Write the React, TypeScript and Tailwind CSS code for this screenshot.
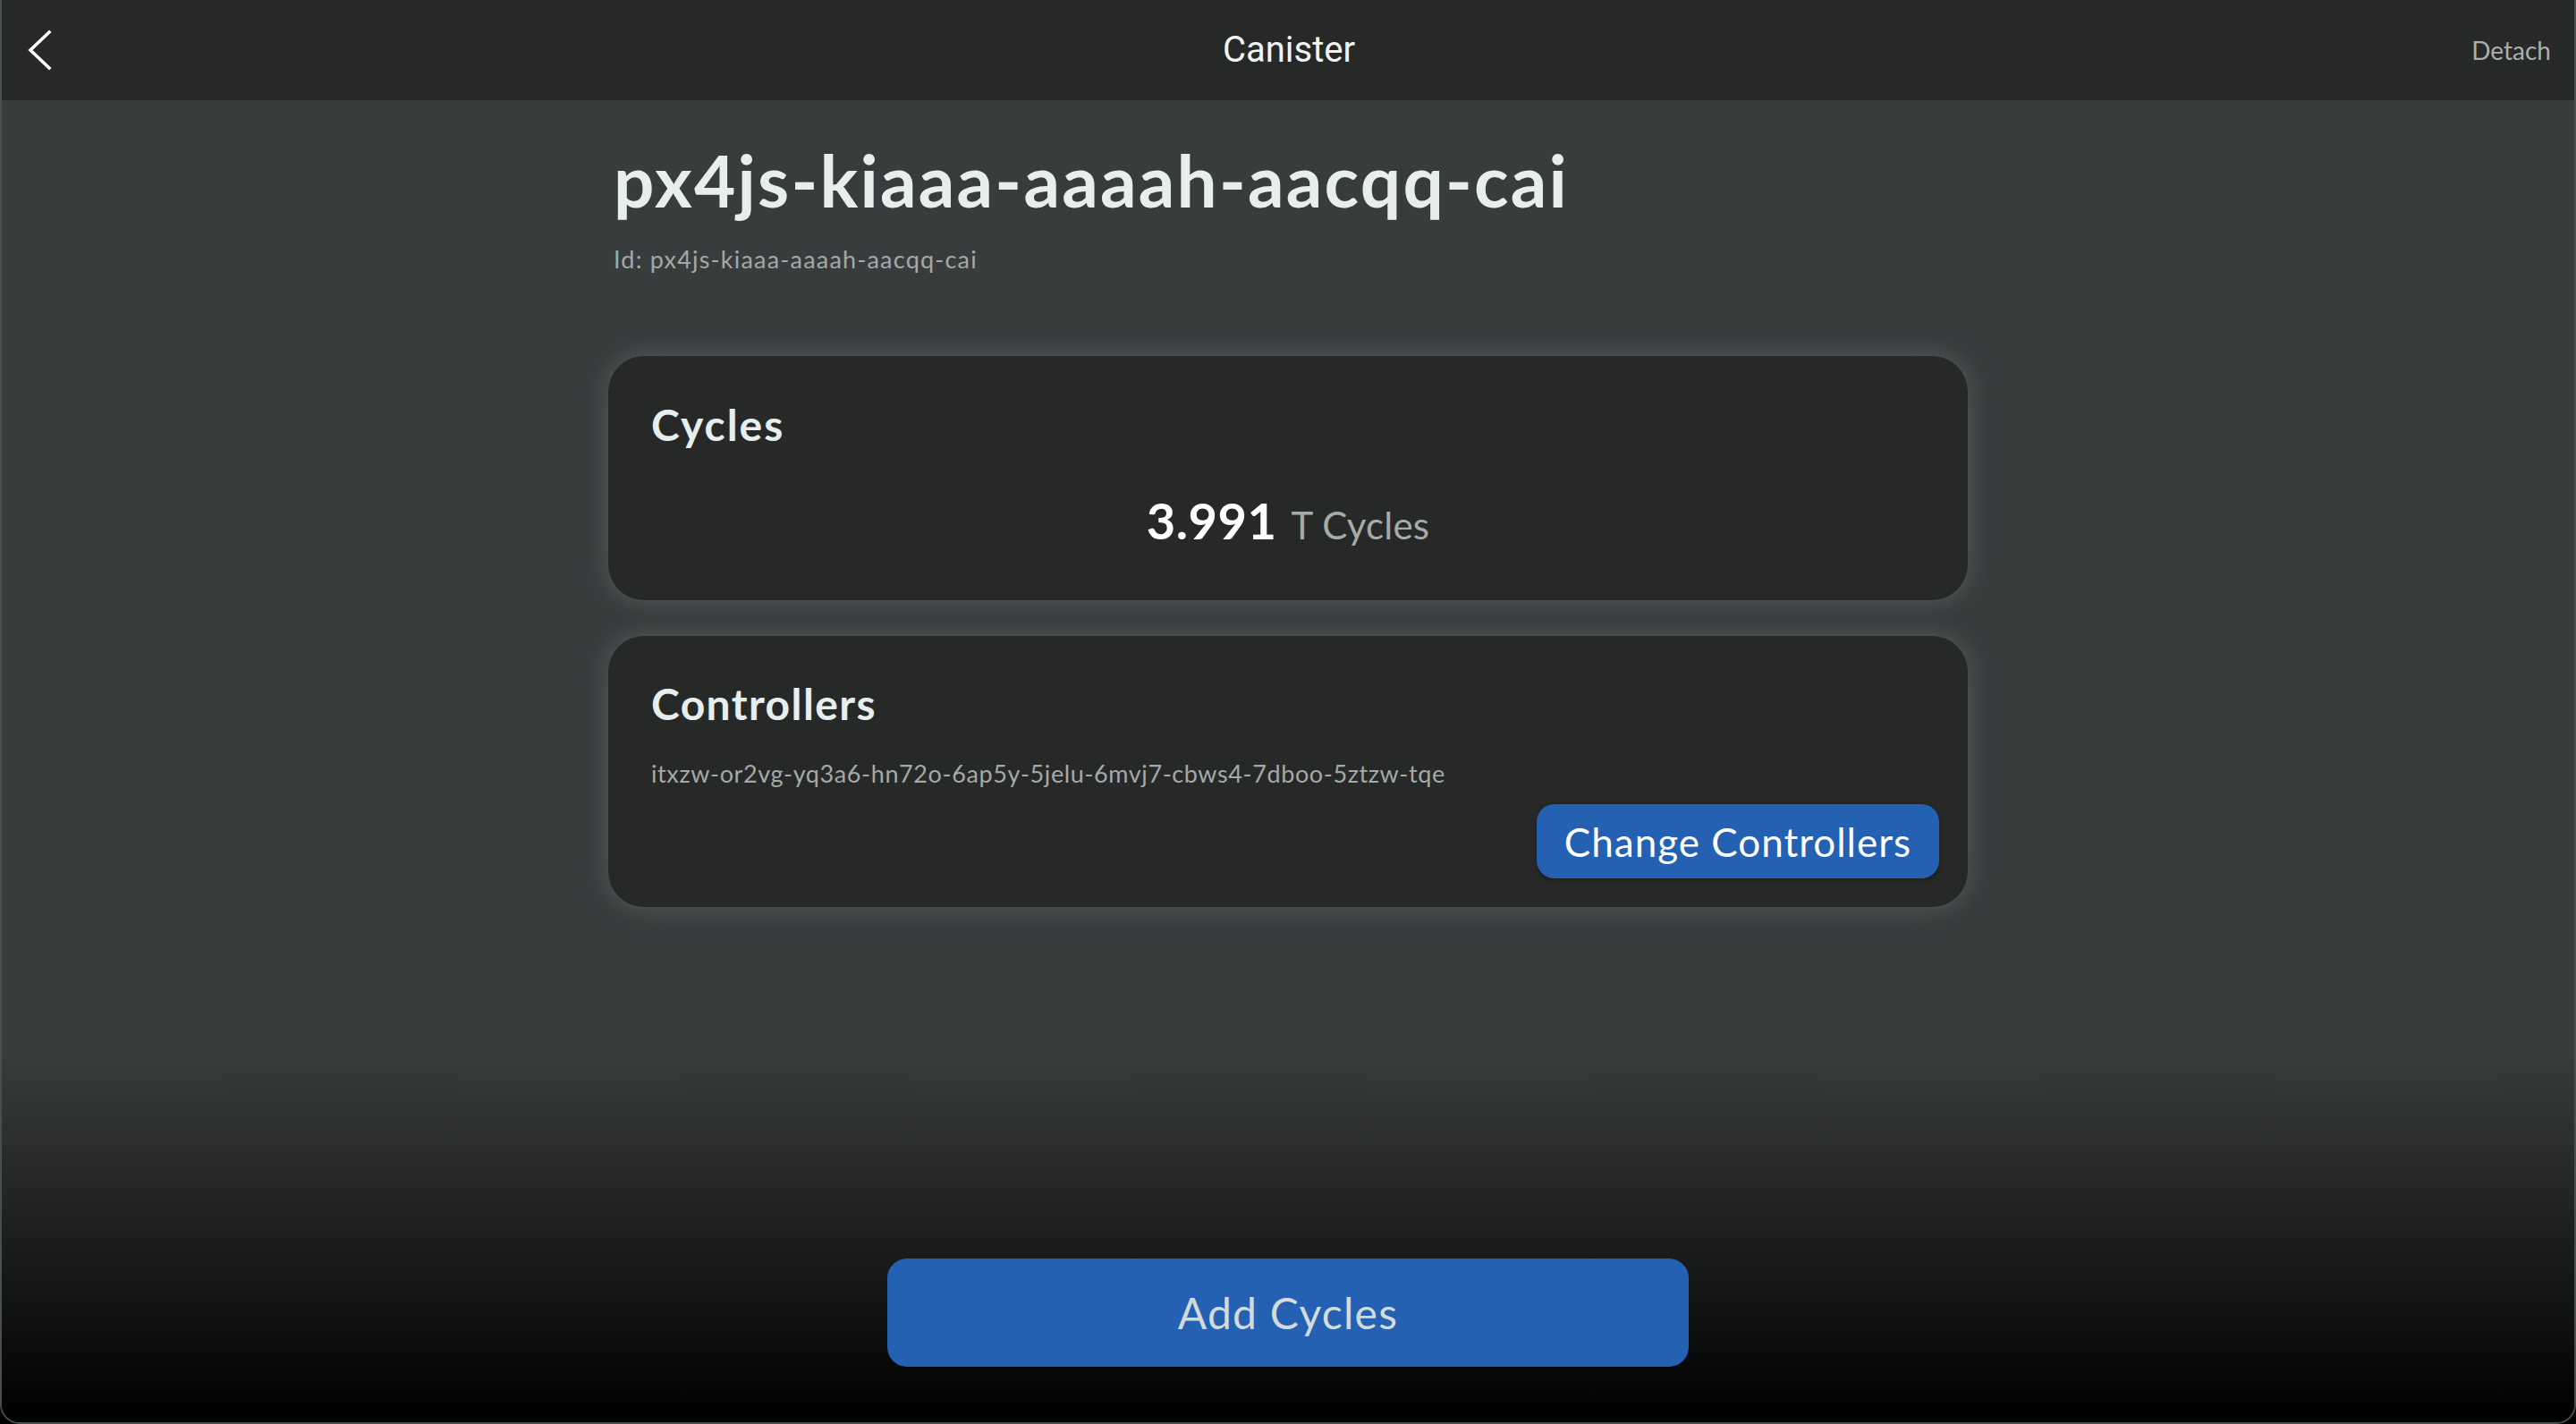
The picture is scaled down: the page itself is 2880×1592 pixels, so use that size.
import React from "react";

export default function App() {
  return (
    <div className="w-full h-[1592px] bg-black">
      <div
        className="w-full h-full flex flex-col overflow-hidden rounded-b-[22px] border-2 border-t-0 border-[#4b4e4f]"
        style={{ fontFamily: "Lato, 'Open Sans', sans-serif" }}
      >
        {/* Header */}
        <header className="h-[112px] shrink-0 bg-[#272928] flex items-center justify-between pl-[28px] pr-[26px]">
          <button className="w-[60px] h-[60px] flex items-center">
            <svg width="28" height="46" viewBox="0 0 28 46" fill="none">
              <path d="M25 3 L4 23 L25 43" stroke="#ffffff" strokeWidth="3.6" strokeLinecap="square" />
            </svg>
          </button>
          <h1
            className="text-[40px] text-[#f2f4f4] leading-none"
            style={{ fontFamily: "Roboto, sans-serif" }}
          >
            Canister
          </h1>
          <span className="w-[60px] flex justify-end">
            <span className="text-[28px] text-[#a9aeae] leading-none whitespace-nowrap">Detach</span>
          </span>
        </header>

        {/* Body */}
        <div className="flex-1 flex flex-col bg-[linear-gradient(to_bottom,#393c3d_0%,#393c3d_72%,#000000_100%)]">
          <main className="flex-1 w-full max-w-[1520px] mx-auto pt-[41px]">
            <div className="pl-[6px]">
              <h2 className="text-[80px] font-bold leading-[1.2] text-[#e6eeee] tracking-[2.2px]">
                px4js-kiaaa-aaaah-aacqq-cai
              </h2>
              <p className="mt-[25px] text-[27px] leading-[1.2] text-[#a3a9a9] tracking-[1.2px]">
                Id: px4js-kiaaa-aaaah-aacqq-cai
              </p>
            </div>

            <section className="mt-[92px] rounded-[40px] bg-[#272928] shadow-[0_0_28px_rgba(95,99,101,0.85)] pl-[48px] pr-[32px] pt-[48px] pb-[56px]">
              <h3 className="text-[48px] font-bold leading-[1.2] text-[#e6eeee] tracking-[2px]">Cycles</h3>
              <div className="mt-[44px] flex items-baseline justify-center gap-[16px] pr-[16px]">
                <span className="text-[56px] font-bold leading-[1.2] text-white tracking-[0.5px]">3.991</span>
                <span className="text-[42px] leading-[1.2] text-[#a5abab] tracking-[0.2px]">T Cycles</span>
              </div>
            </section>

            <section className="mt-[40px] rounded-[40px] bg-[#272928] shadow-[0_0_28px_rgba(95,99,101,0.85)] pl-[48px] pr-[32px] pt-[47px] pb-[32px]">
              <h3 className="text-[48px] font-bold leading-[1.2] text-[#e6eeee] tracking-[1.4px]">Controllers</h3>
              <p className="mt-[33px] text-[27px] leading-[1.2] text-[#a3a9a9] tracking-[0.6px]">
                itxzw-or2vg-yq3a6-hn72o-6ap5y-5jelu-6mvj7-cbws4-7dboo-5ztzw-tqe
              </p>
              <div className="mt-[18px] flex justify-end">
                <button className="h-[83px] w-[450px] rounded-[20px] bg-[#2461b3] text-[44px] text-white leading-none tracking-[1px] shadow-[0_2px_6px_rgba(0,0,0,0.35)]">
                  Change Controllers
                </button>
              </div>
            </section>
          </main>

          <footer className="shrink-0 flex justify-center pb-[62px]">
            <button className="h-[121px] w-[896px] rounded-[22px] bg-[#2461b3] text-[48px] text-[#d3dada] leading-none tracking-[1.3px]">
              Add Cycles
            </button>
          </footer>
        </div>
      </div>
    </div>
  );
}
